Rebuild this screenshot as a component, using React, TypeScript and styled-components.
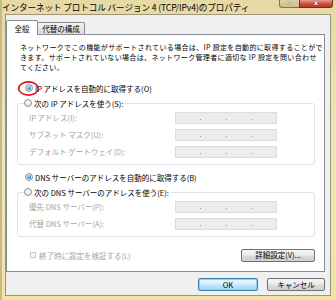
import React from "react";
import styled, { createGlobalStyle, css } from "styled-components";

const GlobalStyle = createGlobalStyle`
  html, body {
    margin: 0;
    padding: 0;
    background: #efe4b6;
  }
  body {
    font-family: "Noto Sans CJK JP", "Noto Sans", sans-serif;
    color: #000;
  }
`;

const Window = styled.div`
  width: 336px;
  height: 300px;
  box-sizing: border-box;
  display: flex;
  flex-direction: column;
  padding: 0 5px 4px 5px;
  background: linear-gradient(180deg, #e7d9a4 0%, #efe4ba 45%, #f1e4a6 100%);
  box-shadow: inset 4px 0 0 -2px #c6ba86;
  overflow: hidden;
`;

const TitleBar = styled.div`
  height: 14px;
  display: flex;
  align-items: flex-start;
  margin: 0 -2px 0 -3px;
`;

const Title = styled.div`
  flex: 1;
  font-size: 8.6px;
  line-height: 14px;
  white-space: nowrap;
  letter-spacing: -0.1px;
`;

const CaptionButton = styled.div<{ $variant: "help" | "close" }>`
  height: 8px;
  box-sizing: border-box;
  display: flex;
  align-items: center;
  justify-content: center;
  font-family: "DejaVu Sans", sans-serif;
  font-weight: bold;
  font-size: 7px;
  line-height: 1;
  border: 1px solid #7d7356;
  border-top: none;
  ${(p) =>
    p.$variant === "help"
      ? css`
          width: 20px;
          border-radius: 0 0 0 3px;
          border-right: none;
          background: linear-gradient(180deg, #ddd1a6 0%, #cbbd8c 100%);
          color: #efe6c8;
          text-shadow: 0 0 1px #4c4330;
        `
      : css`
          width: 34px;
          border-radius: 0 0 3px 0;
          border-color: #7a2c22;
          background: linear-gradient(180deg, #e6a091 0%, #cf4b3b 55%, #c13a2b 100%);
          color: #fff;
          text-shadow: 0 0 1px #5a1a12, 0 0 1px #5a1a12;
        `}
`;

const Client = styled.div`
  flex: 1;
  display: flex;
  flex-direction: column;
  background: #f0f0f0;
  border: 1px solid #9b957c;
  padding: 5px 5px 0 0;
`;

const TabStrip = styled.div`
  height: 14px;
  display: flex;
  align-items: flex-end;
`;

const Tab = styled.div<{ $active?: boolean }>`
  box-sizing: border-box;
  border: 1px solid #898c95;
  border-bottom: none;
  font-size: 7.5px;
  display: flex;
  align-items: center;
  justify-content: center;
  ${(p) =>
    p.$active
      ? css`
          width: 32px;
          height: 15px;
          margin-bottom: -1px;
          background: #fff;
          position: relative;
          z-index: 1;
          border-radius: 2px 2px 0 0;
        `
      : css`
          width: 47px;
          height: 12px;
          border-left: none;
          background: linear-gradient(180deg, #f3f3f3 0%, #e6e6e6 50%, #d9d9d9 100%);
          border-radius: 0 2px 0 0;
        `}
`;

const Panel = styled.div`
  height: 238px;
  box-sizing: border-box;
  background: #fff;
  border: 1px solid #898c95;
  display: flex;
  flex-direction: column;
  padding-top: 7px;
`;

const Description = styled.div`
  padding-left: 13px;
  font-size: 7px;
  line-height: 10.2px;
  letter-spacing: 0.35px;
  white-space: nowrap;
`;

const RadioRow = styled.div<{ $gap?: number }>`
  position: relative;
  height: 15px;
  display: flex;
  align-items: center;
  gap: 2px;
  margin-left: 18px;
  margin-top: ${(p) => p.$gap ?? 0}px;
  font-size: 7.5px;
  white-space: nowrap;
`;

const Radio = styled.span<{ $checked?: boolean }>`
  flex: none;
  width: 8px;
  height: 8px;
  box-sizing: border-box;
  border-radius: 50%;
  border: 1px solid #8e9196;
  background: radial-gradient(circle at 50% 35%, #ffffff 0%, #ececec 55%, #d2d2d2 100%);
  display: flex;
  align-items: center;
  justify-content: center;
  ${(p) =>
    p.$checked &&
    css`
      &::after {
        content: "";
        width: 4px;
        height: 4px;
        border-radius: 50%;
        background: radial-gradient(circle at 40% 35%, #9bdcff 0%, #2a86d6 60%, #0f4f98 100%);
      }
    `}
`;

const HighlightRing = styled.svg`
  position: absolute;
  left: -7px;
  top: 0px;
  width: 21px;
  height: 15px;
  overflow: visible;
  pointer-events: none;
`;

const Group = styled.fieldset`
  margin: 0 9px 0 10px;
  padding: 0 0 6px 0;
  border: 1px solid #dde2e8;
  border-radius: 3px;
  min-width: 0;
`;

const GroupLegend = styled.legend`
  margin-left: 6px;
  padding: 0 2px 0 0;
  height: 15px;
  display: flex;
  align-items: center;
  gap: 2px;
  font-size: 7.5px;
  white-space: nowrap;
`;

const Fields = styled.div`
  display: flex;
  flex-direction: column;
  gap: 5px;
  margin-top: 1px;
`;

const FieldRow = styled.div`
  height: 12px;
  display: flex;
  align-items: center;
  padding-left: 11px;
`;

const FieldLabel = styled.span`
  width: 146px;
  font-size: 7.5px;
  color: #a3a3a3;
  white-space: nowrap;
`;

const IpBox = styled.div`
  width: 102px;
  height: 12px;
  box-sizing: border-box;
  display: flex;
  align-items: center;
  border: 1px solid #dcdcdc;
  background: #ececec;
`;

const IpSegment = styled.span`
  flex: 1;
`;

const IpDot = styled.span`
  width: 1px;
  height: 1px;
  margin-top: 3px;
  background: #9a9a9a;
`;

const BottomRow = styled.div`
  margin: 12px 9px 0 23px;
  height: 13px;
  display: flex;
  align-items: center;
`;

const CheckBox = styled.span`
  width: 6px;
  height: 6px;
  box-sizing: border-box;
  border: 1px solid #c6c6c6;
  background: #f6f6f6;
  margin-right: 3px;
`;

const CheckLabel = styled.span`
  font-size: 7.5px;
  color: #a3a3a3;
  white-space: nowrap;
`;

const Button = styled.button<{ $default?: boolean; $width: number }>`
  width: ${(p) => p.$width}px;
  height: 13px;
  padding: 0;
  font-family: inherit;
  font-size: 7.5px;
  line-height: 1;
  color: #000;
  border-radius: 2px;
  border: 1px solid #707070;
  background: linear-gradient(180deg, #f4f4f4 0%, #ececec 48%, #dddddd 52%, #cfcfcf 100%);
  ${(p) =>
    p.$default &&
    css`
      border-color: #3c7fb1;
      box-shadow: inset 0 0 0 1px #8fd0f3;
      background: linear-gradient(180deg, #eaf6fd 0%, #d9f0fc 48%, #bee6fd 52%, #a7d9f5 100%);
    `}
`;

const AdvancedButton = styled(Button)`
  margin-left: auto;
`;

const Footer = styled.div`
  display: flex;
  justify-content: flex-end;
  gap: 9px;
  padding-top: 6px;
`;

const IpField = ({ label }: { label: string }) => (
  <FieldRow>
    <FieldLabel>{label}</FieldLabel>
    <IpBox>
      <IpSegment />
      <IpDot />
      <IpSegment />
      <IpDot />
      <IpSegment />
      <IpDot />
      <IpSegment />
    </IpBox>
  </FieldRow>
);

const App = () => {
  return (
    <>
      <GlobalStyle />
      <Window>
        <TitleBar>
          <Title>インターネット プロトコル バージョン 4 (TCP/IPv4)のプロパティ</Title>
          <CaptionButton $variant="help">?</CaptionButton>
          <CaptionButton $variant="close">x</CaptionButton>
        </TitleBar>
        <Client>
          <TabStrip>
            <Tab $active>全般</Tab>
            <Tab>代替の構成</Tab>
          </TabStrip>
          <Panel>
            <Description>
              ネットワークでこの機能がサポートされている場合は、IP 設定を自動的に取得することがで
              <br />
              きます。サポートされていない場合は、ネットワーク管理者に適切な IP 設定を問い合わせ
              <br />
              てください。
            </Description>

            <RadioRow $gap={8}>
              <Radio $checked />
              <span>IP アドレスを自動的に取得する(O)</span>
              <HighlightRing viewBox="0 0 21 15">
                <ellipse cx="10.5" cy="7.5" rx="9.8" ry="6.6" fill="none" stroke="#e3111b" strokeWidth="1.7" />
              </HighlightRing>
            </RadioRow>
            <Group>
              <GroupLegend>
                <Radio />
                <span>次の IP アドレスを使う(S):</span>
              </GroupLegend>
              <Fields>
                <IpField label="IP アドレス(I):" />
                <IpField label="サブネット マスク(U):" />
                <IpField label="デフォルト ゲートウェイ(D):" />
              </Fields>
            </Group>

            <RadioRow $gap={5}>
              <Radio $checked />
              <span>DNS サーバーのアドレスを自動的に取得する(B)</span>
            </RadioRow>
            <Group>
              <GroupLegend>
                <Radio />
                <span>次の DNS サーバーのアドレスを使う(E):</span>
              </GroupLegend>
              <Fields>
                <IpField label="優先 DNS サーバー(P):" />
                <IpField label="代替 DNS サーバー(A):" />
              </Fields>
            </Group>

            <BottomRow>
              <CheckBox />
              <CheckLabel>終了時に設定を検証する(L)</CheckLabel>
              <AdvancedButton $width={74}>詳細設定(V)...</AdvancedButton>
            </BottomRow>
          </Panel>
          <Footer>
            <Button $default $width={60}>OK</Button>
            <Button $width={58}>キャンセル</Button>
          </Footer>
        </Client>
      </Window>
    </>
  );
};

export default App;
